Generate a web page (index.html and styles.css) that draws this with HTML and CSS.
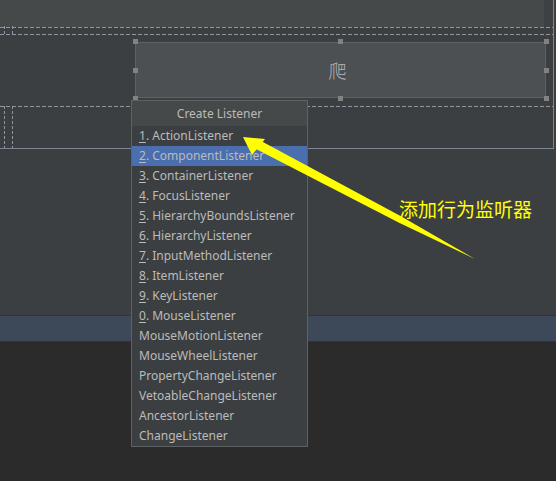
FILE: index.html
```html
<!DOCTYPE html>
<html>
<head>
<meta charset="utf-8">
<link rel="stylesheet" href="styles.css">
</head>
<body>
<div class="ide">
  <div class="designer">
    <div class="form">
      <div class="toprow"><div class="toprow-side"></div></div>
      <div class="dash"></div>
      <div class="gap"><span class="vdash v1"></span><span class="vdash v2"></span></div>
      <div class="dash"></div>
      <div class="cell">
        <div class="button">
          <span class="btn-text">爬</span>
          <span class="handle h-tl"></span><span class="handle h-tm"></span><span class="handle h-tr"></span>
          <span class="handle h-ml"></span><span class="handle h-mr"></span>
          <span class="handle h-bl"></span><span class="handle h-bm"></span><span class="handle h-br"></span>
        </div>
      </div>
      <div class="dash"></div>
      <div class="cell2"><span class="vdash v1 tall"></span><span class="vdash v2 tall"></span></div>
    </div>
  </div>
  <div class="band"></div>
  <div class="bottom"></div>

  <div class="popup">
    <div class="popup-title">Create Listener</div>
    <ul class="menu">
      <li><u>1</u>. ActionListener</li>
      <li class="sel"><u>2</u>. ComponentListener</li>
      <li><u>3</u>. ContainerListener</li>
      <li><u>4</u>. FocusListener</li>
      <li><u>5</u>. HierarchyBoundsListener</li>
      <li><u>6</u>. HierarchyListener</li>
      <li><u>7</u>. InputMethodListener</li>
      <li><u>8</u>. ItemListener</li>
      <li><u>9</u>. KeyListener</li>
      <li><u>0</u>. MouseListener</li>
      <li>MouseMotionListener</li>
      <li>MouseWheelListener</li>
      <li>PropertyChangeListener</li>
      <li>VetoableChangeListener</li>
      <li>AncestorListener</li>
      <li>ChangeListener</li>
    </ul>
  </div>

  <svg class="arrow" width="556" height="481" viewBox="0 0 556 481">
    <polygon points="243,137 265,139 252,155" fill="#ffff00"/>
    <polygon points="262,141.5 401.4,216.5 475,259 398.6,222.5 256,149" fill="#ffff00"/>
  </svg>
  <div class="note">添加行为监听器</div>
</div>
</body>
</html>
```

FILE: styles.css
```css
html, body {
  margin: 0;
  padding: 0;
}
body {
  width: 556px;
  height: 481px;
  overflow: hidden;
  background: #3c3f41;
  font-family: "Noto Sans", "Noto Sans CJK SC", sans-serif;
}
.ide {
  position: relative;
  width: 556px;
  height: 481px;
  display: flex;
  flex-direction: column;
}
.designer {
  height: 315px;
  background: #3c3f41;
}
.form {
  width: 553px;
  border-right: 1px solid #7d8592;
  border-bottom: 1px solid #7d8592;
  display: flex;
  flex-direction: column;
}
.toprow {
  height: 27px;
  background: #45494a;
  display: flex;
  justify-content: flex-end;
}
.toprow-side {
  width: 9px;
  background: #3e4143;
}
.dash {
  height: 1px;
  background: repeating-linear-gradient(90deg, #8f97a1 0 4px, transparent 4px 6px);
}
.gap {
  height: 6px;
  position: relative;
}
.vdash {
  position: absolute;
  width: 1px;
  top: -2px;
  height: 10px;
  background: repeating-linear-gradient(180deg, #8f97a1 0 3px, transparent 3px 5px);
}
.v1 { left: 4px; }
.v2 { left: 12px; }
.vdash.tall {
  top: -1px;
  height: 42px;
}
.cell {
  height: 71px;
  padding-top: 7px;
  box-sizing: border-box;
}
.cell2 {
  height: 41px;
  position: relative;
}
.button {
  position: relative;
  margin-left: 135px;
  width: 409px;
  height: 54px;
  background: #4c5052;
  border: 1px solid #5e6264;
  display: flex;
  align-items: center;
  justify-content: center;
}
.btn-text {
  font-family: "Noto Sans CJK SC", sans-serif;
  font-size: 18px;
  color: #b4b8bb;
  font-weight: 300;
  margin-left: -6px;
}
.handle {
  position: absolute;
  width: 5px;
  height: 5px;
  background: #828282;
}
.h-tl { left: -3px; top: -4px; }
.h-tm { left: 202px; top: -4px; }
.h-tr { right: -4px; top: -4px; }
.h-ml { left: -3px; top: 25px; }
.h-mr { right: -4px; top: 25px; }
.h-bl { left: -3px; bottom: -4px; }
.h-bm { left: 202px; bottom: -4px; }
.h-br { right: -4px; bottom: -4px; }
.band {
  height: 25px;
  background: #3d4858;
  border-top: 1px solid #333638;
  border-bottom: 1px solid #313335;
}
.bottom {
  flex: 1;
  background: #2b2b2b;
}
.popup {
  position: absolute;
  left: 131px;
  top: 100px;
  width: 175px;
  background: #3c3f41;
  border: 1px solid #5f6264;
}
.popup-title {
  height: 25px;
  background: #45494a;
  color: #bbbbbb;
  font-size: 12px;
  line-height: 25px;
  text-align: center;
}
.menu {
  list-style: none;
  margin: 0;
  padding: 0;
}
.menu li {
  height: 20px;
  line-height: 20px;
  padding-left: 7px;
  color: #bbbbbb;
  font-size: 12px;
  white-space: nowrap;
}
.menu li u {
  text-underline-offset: 2px;
}
.menu li.sel {
  background: #4b6eaf;
}
.arrow {
  position: absolute;
  left: 0;
  top: 0;
}
.note {
  position: absolute;
  left: 399px;
  top: 196px;
  font-family: "Noto Sans CJK SC", sans-serif;
  font-size: 19px;
  line-height: 26px;
  color: #ffff00;
}
```
